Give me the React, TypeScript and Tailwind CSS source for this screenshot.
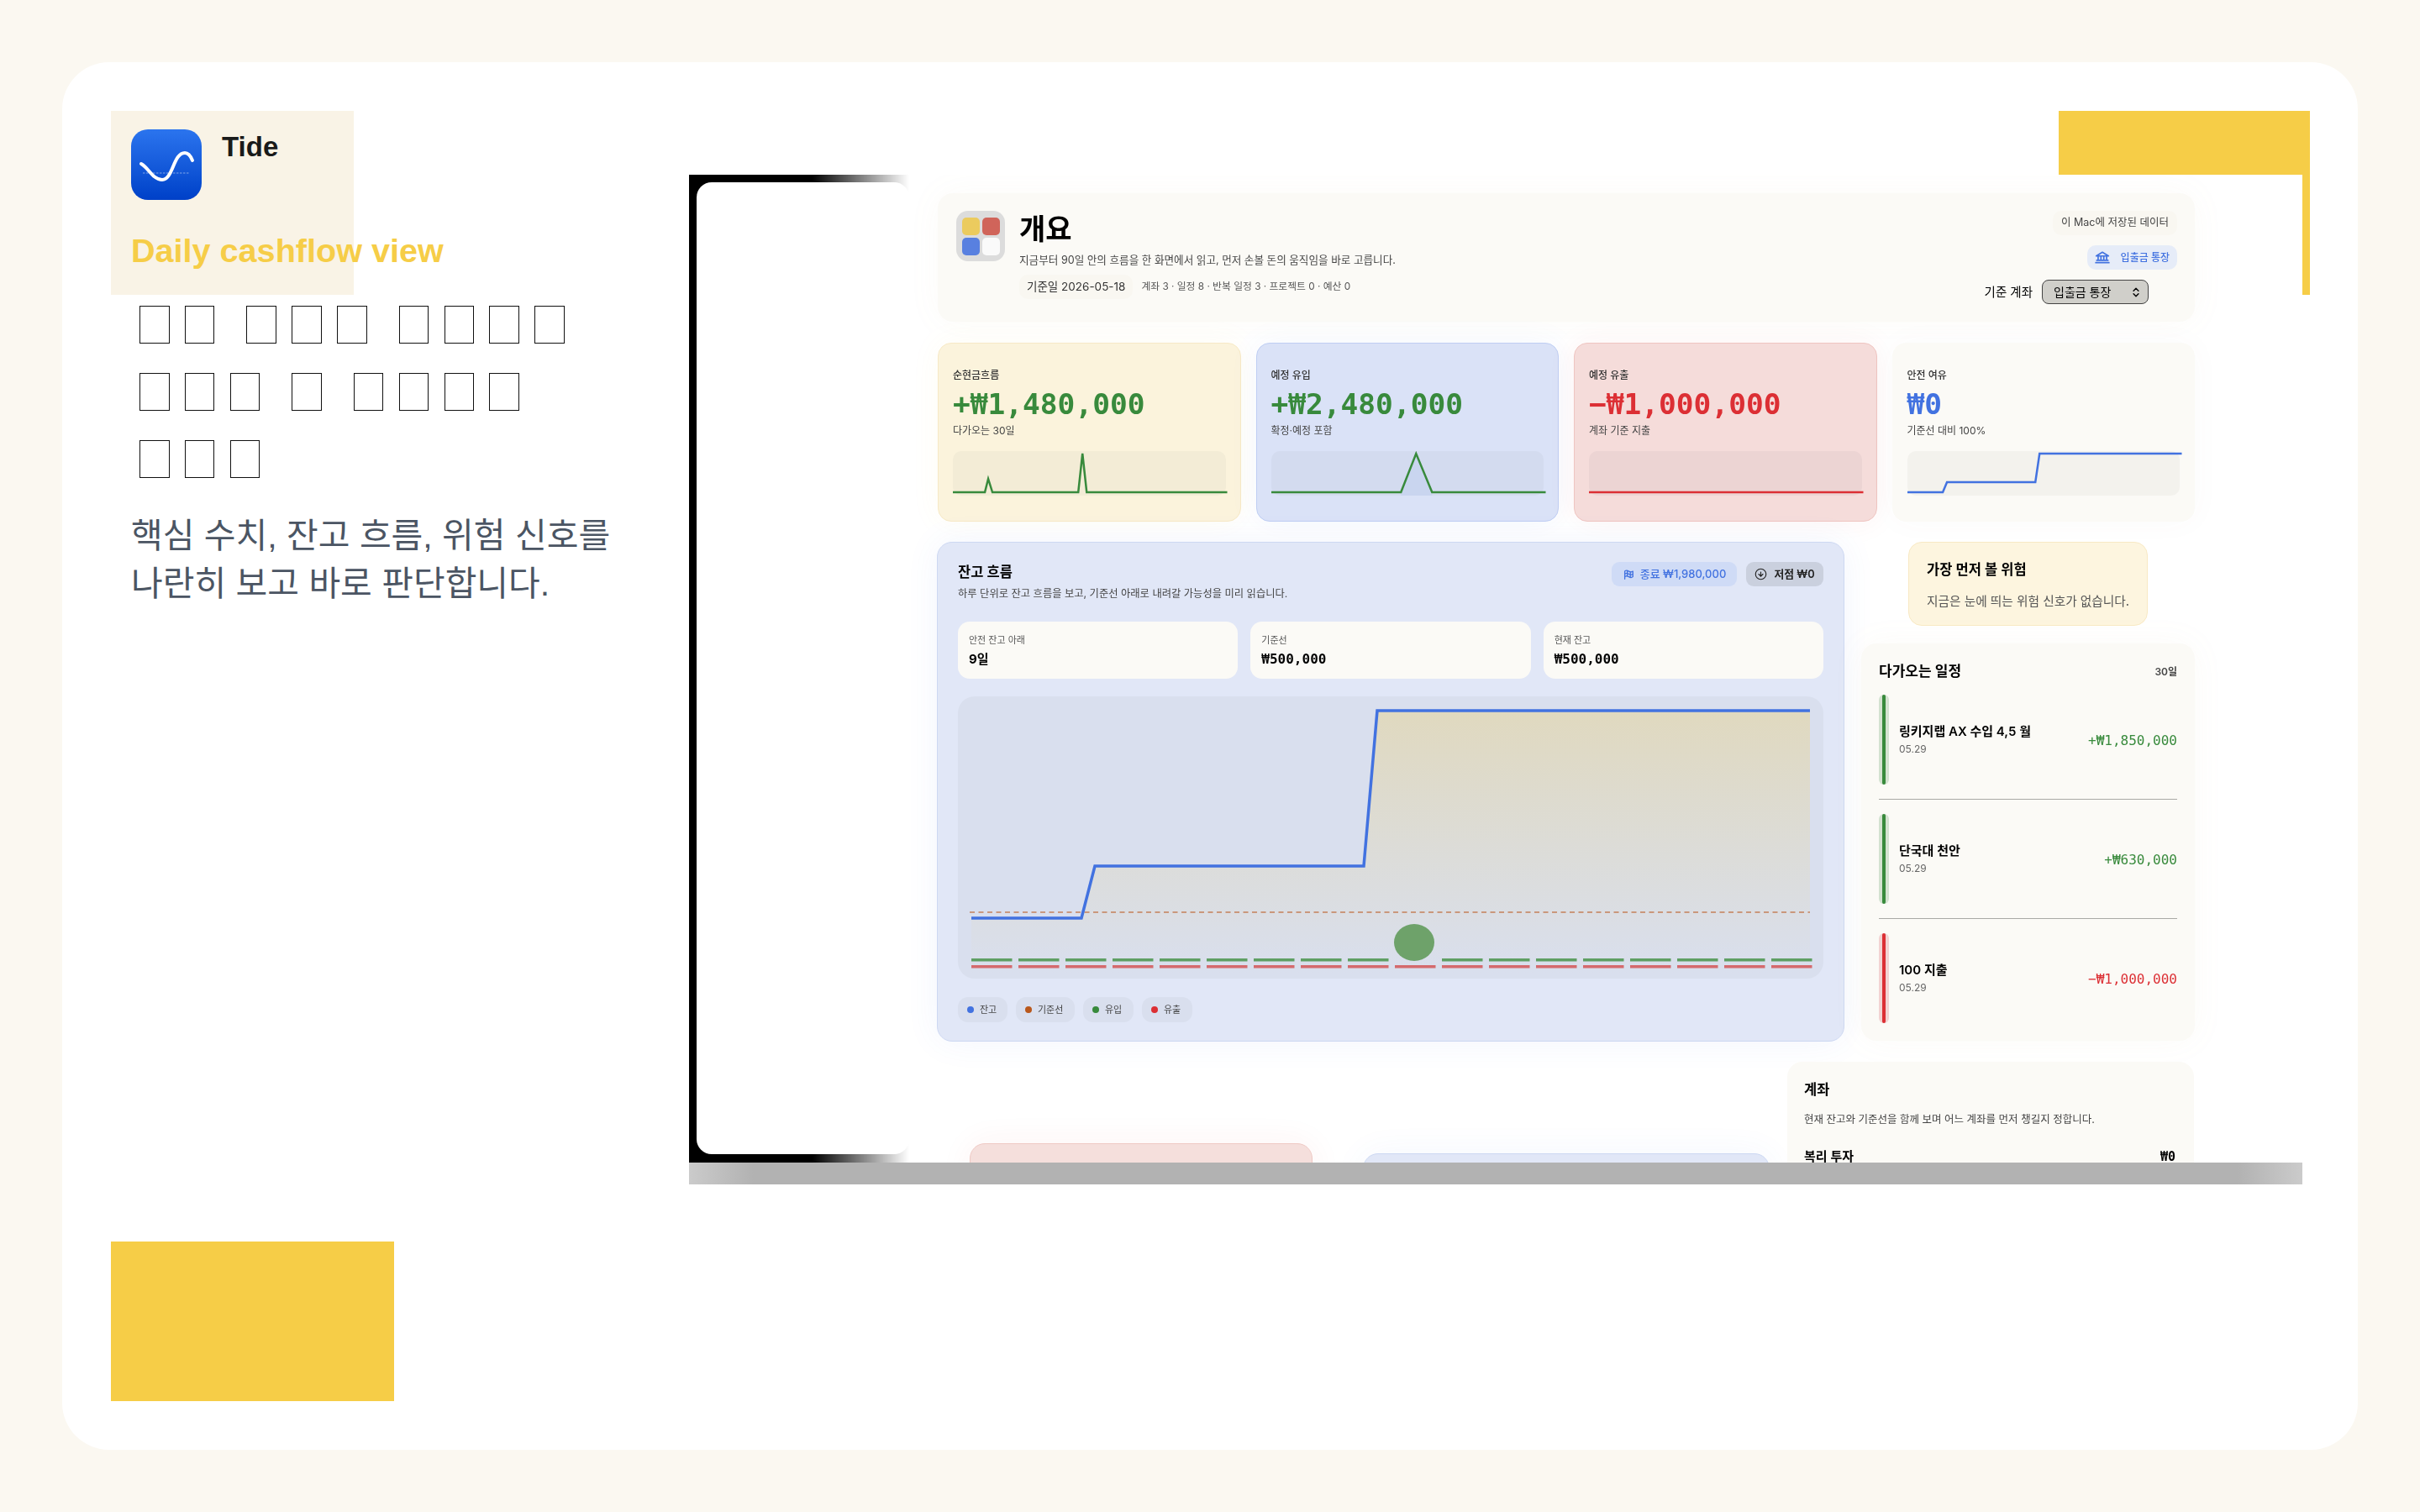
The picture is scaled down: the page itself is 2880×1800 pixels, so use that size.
import { ChevronsUpDown, CircleArrowDown } from 'lucide-react';
import { PiBankBold, PiFlagCheckeredBold } from 'react-icons/pi';

const sans = "font-['Liberation_Sans','Noto_Sans_CJK_KR',sans-serif]";
const ui = "font-['Inter','Noto_Sans_CJK_KR',sans-serif]";
const mono = "font-['DejaVu_Sans_Mono','Noto_Sans_CJK_KR',monospace]";

const tofuLines = [
    [2, 3, 4],
    [3, 1, 4],
    [3],
];

const kpis = [
    {
        label: '순현금흐름',
        value: '+₩1,480,000',
        sub: '다가오는 30일',
        card: 'bg-[#fbf3dc] border-[#f7e9c6] shadow-[0_0_36px_rgba(246,205,71,0.06)]',
        plot: 'bg-[#f3ecd6]',
        tone: 'text-[#388a3c]',
        stroke: '#388a3c',
        points: '0,49 38,49 42,33 47,49 149,49 154,3 159,49 326,49',
        fill: '',
    },
    {
        label: '예정 유입',
        value: '+₩2,480,000',
        sub: '확정·예정 포함',
        card: 'bg-[#dae2f7] border-[#bfcef3] shadow-[0_0_36px_rgba(66,114,224,0.06)]',
        plot: 'bg-[#d3dbef]',
        tone: 'text-[#388a3c]',
        stroke: '#388a3c',
        points: '0,49 154,49 172,3 191,49 326,49',
        fill: 'M154 49 L172 3 L191 49 L191 53 L154 53 Z',
    },
    {
        label: '예정 유출',
        value: '−₩1,000,000',
        sub: '계좌 기준 지출',
        card: 'bg-[#f5dcda] border-[#efc5c1] shadow-[0_0_36px_rgba(220,47,52,0.06)]',
        plot: 'bg-[#ecd4d3]',
        tone: 'text-[#dc2f34]',
        stroke: '#dc2f34',
        points: '0,49 326,49',
        fill: '',
    },
    {
        label: '안전 여유',
        value: '₩0',
        sub: '기준선 대비 100%',
        card: 'bg-[#fbfaf6] border-[#fbfaf6] shadow-[0_0_36px_rgba(120,110,80,0.03)]',
        plot: 'bg-[#f3f2ed]',
        tone: 'text-[#4272e0]',
        stroke: '#4272e0',
        points: '0,49 42,49 47,37 152,37 157,3 326,3',
        fill: '',
    },
];

const stats = [
    { label: '안전 잔고 아래', value: '9일', font: `${ui} text-[15px]` },
    { label: '기준선', value: '₩500,000', font: `${mono} text-[16px]` },
    { label: '현재 잔고', value: '₩500,000', font: `${mono} text-[16px]` },
];

const legend = [
    { label: '잔고', dot: 'bg-[#4272e0]', width: 'w-[59px]' },
    { label: '기준선', dot: 'bg-[#b9581c]', width: 'w-[70px]' },
    { label: '유입', dot: 'bg-[#388a3c]', width: 'w-[60px]' },
    { label: '유출', dot: 'bg-[#dc2f34]', width: 'w-[60px]' },
];

const schedule = [
    { title: '링키지랩 AX 수입 4,5 월', amount: '+₩1,850,000', tone: 'text-[#388a3c]', bar: 'bg-[#388a3c]', halo: 'bg-[#d3e2d0]' },
    { title: '단국대 천안', amount: '+₩630,000', tone: 'text-[#388a3c]', bar: 'bg-[#388a3c]', halo: 'bg-[#d3e2d0]' },
    { title: '100 지출', amount: '−₩1,000,000', tone: 'text-[#dc2f34]', bar: 'bg-[#dc2f34]', halo: 'bg-[#f2d3d2]' },
];

function Logo() {
    return (
        <div className="w-[84px] h-[84px] rounded-[20px] bg-gradient-to-b from-[#2b74ee] to-[#0040c8] shrink-0">
            <svg width="84" height="84" viewBox="0 0 84 84" fill="none">
                <path d="M14 52 H70" stroke="#fff" strokeOpacity="0.6" strokeWidth="0.8" strokeDasharray="2.5 1.5" />
                <path d="M12 41 C21 46 26 60 37 60 C50 60 50 28 64 28 C68 28 71 32 73 37" stroke="#fff" strokeWidth="4" strokeLinecap="round" />
            </svg>
        </div>
    );
}

function TofuHeading() {
    return (
        <div className="flex flex-col gap-[35px] pl-[10px]">
            {tofuLines.map((line, i) => (
                <div key={i} className="flex gap-[38px]">
                    {line.map((count, j) => (
                        <div key={j} className="flex gap-[18.4px]">
                            {Array.from({ length: count }).map((_, k) => (
                                <span key={k} className="w-[35.5px] h-[45px] border-[1.5px] border-[#111]" />
                            ))}
                        </div>
                    ))}
                </div>
            ))}
        </div>
    );
}

function OverviewIcon() {
    return (
        <div className="w-[58px] h-[60px] rounded-[14px] bg-[#dcdcdc] grid grid-cols-[21px_21px] grid-rows-[21px_21px] gap-[3px] content-center justify-center shrink-0">
            <span className="rounded-[5px] bg-[#ebcb5e]" />
            <span className="rounded-[5px] bg-[#d0645a]" />
            <span className="rounded-[5px] bg-[#5880e0]" />
            <span className="rounded-[5px] bg-[#fafafa]" />
        </div>
    );
}

function Header() {
    return (
        <div className="h-[153px] rounded-[18px] bg-[#fbfaf6] shadow-[0_0_40px_rgba(190,170,120,0.05)] flex justify-between pl-[22px] pr-[21px] pt-[21px]">
            <div className="flex gap-[17px]">
                <OverviewIcon />
                <div>
                    <h1 className="text-[34px] leading-[40px] font-semibold text-black mt-[2px]">개요</h1>
                    <p className="text-[12.6px] leading-[18px] text-[#444] mt-[8px]">지금부터 90일 안의 흐름을 한 화면에서 읽고, 먼저 손볼 돈의 움직임을 바로 고릅니다.</p>
                    <div className="flex items-center gap-[10px] mt-[8px]">
                        <span className="h-[29px] px-[9px] rounded-[10px] bg-[#f9f7f1] text-[13.5px] text-[#333] flex items-center">기준일 2026-05-18</span>
                        <span className="text-[11.8px] text-[#555]">계좌 3 · 일정 8 · 반복 일정 3 · 프로젝트 0 · 예산 0</span>
                    </div>
                </div>
            </div>
            <div className="flex flex-col items-end">
                <span className="h-[29px] px-[10px] rounded-[10px] bg-[#f9f7f1] text-[12.5px] text-[#444] flex items-center">이 Mac에 저장된 데이터</span>
                <span className="h-[29px] mt-[12px] pl-[9px] pr-[9px] rounded-[10px] bg-[#e6ecf8] text-[12px] font-medium text-[#4272e0] flex items-center gap-[13px]">
                    <PiBankBold size={18} />
                    입출금 통장
                </span>
                <div className="flex items-center gap-[11px] mt-[12px] mr-[34px]">
                    <span className="text-[14.5px] text-black">기준 계좌</span>
                    <span className="w-[127px] h-[29px] rounded-[8px] border-[1.5px] border-[#444] bg-[#d0cfca] text-[14px] text-black flex items-center justify-between pl-[13px] pr-[7px]">
                        입출금 통장
                        <ChevronsUpDown size={14} strokeWidth={2.4} />
                    </span>
                </div>
            </div>
        </div>
    );
}

function KpiCard({ kpi }: { kpi: typeof kpis[0] }) {
    return (
        <div className={`rounded-[16px] border ${kpi.card} pt-[30px] px-[17px]`}>
            <div className="text-[12px] leading-[16px] font-medium text-[#333]">{kpi.label}</div>
            <div className={`${mono} text-[34.5px] leading-[40px] font-bold mt-[6px] ${kpi.tone}`}>{kpi.value}</div>
            <div className="text-[12px] leading-[16px] text-[#444] mt-[4px]">{kpi.sub}</div>
            <div className={`h-[53px] rounded-[10px] mt-[16px] ${kpi.plot}`}>
                <svg className="overflow-visible" width="100%" height="53" viewBox="0 0 324 53" fill="none" preserveAspectRatio="none">
                    {kpi.fill && <path d={kpi.fill} fill="#c9d5ef" />}
                    <polyline points={kpi.points} stroke={kpi.stroke} strokeWidth="2.5" />
                </svg>
            </div>
        </div>
    );
}

function BalanceChart() {
    const dashes = Array.from({ length: 18 }, (_, i) => 16 + i * 56);
    return (
        <div className="h-[336px] rounded-[20px] bg-[#d9dfee] mt-[21px]">
            <svg width="1032" height="336" viewBox="0 0 1032 336" fill="none">
                <defs>
                    <linearGradient id="balance-area" x1="0" y1="0" x2="0" y2="1">
                        <stop offset="0" stopColor="#e0d9bf" />
                        <stop offset="1" stopColor="#d9dfee" />
                    </linearGradient>
                </defs>
                <path d="M16 264 H147 L163 202 H483 L499 17 H1014 V330 H16 Z" fill="url(#balance-area)" />
                <path d="M14 257 H1014" stroke="#b9581c" strokeOpacity="0.7" strokeWidth="1.6" strokeDasharray="6 4.5" />
                {dashes.map((x, i) => (
                    <g key={x}>
                        {i !== 9 && <rect x={x} y="312" width="48.5" height="3.5" fill="#5f9f63" />}
                        <rect x={x} y="320" width="48.5" height="3.5" fill="#d46a6d" />
                    </g>
                ))}
                <ellipse cx="543" cy="293" rx="24" ry="22" fill="#6ea26a" />
                <path d="M16 264 H147 L163 202 H483 L499 17 H1014" stroke="#4272e0" strokeWidth="3.5" />
            </svg>
        </div>
    );
}

function BalancePanel() {
    return (
        <section className="w-[1080px] -ml-[1px] h-[595px] rounded-[18px] border border-[#cdd8f2] bg-[#e1e7f7] shadow-[0_0_40px_rgba(66,114,224,0.07)] px-[24px] pt-[22px] shrink-0">
            <div className="flex justify-between">
                <div>
                    <h2 className="text-[16.5px] leading-[26px] font-semibold text-black">잔고 흐름</h2>
                    <p className="text-[12.3px] leading-[18px] text-[#444] mt-[4px]">하루 단위로 잔고 흐름을 보고, 기준선 아래로 내려갈 가능성을 미리 읽습니다.</p>
                </div>
                <div className="flex gap-[11px] mt-[1px]">
                    <span className="h-[29px] w-[149px] rounded-[9px] bg-[#cfdbf6] text-[13px] font-medium text-[#4272e0] flex items-center justify-center gap-[7px]">
                        <PiFlagCheckeredBold size={14} />
                        종료 ₩1,980,000
                    </span>
                    <span className="h-[29px] w-[92px] rounded-[9px] bg-[#cad0de] text-[12.8px] font-semibold text-[#222] flex items-center justify-center gap-[8px]">
                        <CircleArrowDown size={15} strokeWidth={1.8} />
                        저점 ₩0
                    </span>
                </div>
            </div>
            <div className="grid grid-cols-3 gap-[15px] mt-[24px]">
                {stats.map((stat) => (
                    <div key={stat.label} className="h-[68px] rounded-[14px] bg-[#fbfaf6] px-[13px] pt-[14px]">
                        <div className="text-[11px] leading-[16px] text-[#555]">{stat.label}</div>
                        <div className={`${stat.font} font-bold leading-[20px] text-black mt-[5px]`}>{stat.value}</div>
                    </div>
                ))}
            </div>
            <BalanceChart />
            <div className="flex gap-[10px] mt-[22px]">
                {legend.map((item) => (
                    <span key={item.label} className={`${item.width} h-[30px] rounded-[12px] bg-[#d9dfee] text-[11px] text-[#444] flex items-center pl-[11px] gap-[7px]`}>
                        <span className={`w-[8px] h-[8px] rounded-full ${item.dot}`} />
                        {item.label}
                    </span>
                ))}
            </div>
        </section>
    );
}

function RiskCard() {
    return (
        <div className="w-[285px] h-[100px] ml-[56px] rounded-[16px] border border-[#f8e9c4] bg-[#fdf5df] px-[21px] pt-[20px]">
            <h3 className="text-[16.5px] leading-[24px] font-semibold text-black">가장 먼저 볼 위험</h3>
            <p className="text-[14.7px] leading-[22px] text-[#555] mt-[15px] whitespace-nowrap">지금은 눈에 띄는 위험 신호가 없습니다.</p>
        </div>
    );
}

function UpcomingPanel() {
    return (
        <div className="h-[473px] mt-[21px] rounded-[18px] bg-[#fbfaf6] shadow-[0_0_40px_rgba(190,170,120,0.05)] px-[21px] pt-[20px]">
            <div className="flex items-center justify-between h-[24px] relative top-[2px]">
                <h3 className="text-[17px] font-semibold text-black">다가오는 일정</h3>
                <span className="text-[12px] font-semibold text-[#444]">30일</span>
            </div>
            <div className="flex flex-col mt-[17px]">
                {schedule.map((row, i) => (
                    <div key={row.title} className={`flex items-center gap-[12px] ${i < 2 ? 'border-b border-[#a9a9a5] pb-[17px] mb-[17px]' : ''}`}>
                        <div className={`w-[12px] h-[107px] rounded-full flex justify-center ${row.halo}`}>
                            <span className={`w-[4px] h-full rounded-full ${row.bar}`} />
                        </div>
                        <div className="flex-1">
                            <div className="text-[15px] leading-[20px] font-semibold text-black">{row.title}</div>
                            <div className="text-[12px] leading-[16px] text-[#666] mt-[3px]">05.29</div>
                        </div>
                        <div className={`${mono} text-[16px] pt-[3px] ${row.tone}`}>{row.amount}</div>
                    </div>
                ))}
            </div>
        </div>
    );
}

function BottomRow() {
    return (
        <div className="flex items-start">
            <div className="w-[408px] h-[200px] ml-[38px] mt-[121px] rounded-[18px] border border-[#efc9c4] bg-[#f5dfdc] shadow-[0_0_40px_rgba(220,47,52,0.06)] shrink-0" />
            <div className="w-[484px] h-[200px] ml-[60px] mt-[133px] rounded-[18px] border border-[#ccd8f2] bg-[#e1e7f7] shadow-[0_0_40px_rgba(66,114,224,0.06)] shrink-0" />
            <div className="w-[484px] h-[300px] ml-[21px] mt-[24px] rounded-[18px] bg-[#fbfaf6] px-[20px] pt-[21px] shrink-0">
                <h3 className="text-[16.5px] leading-[24px] font-semibold text-black">계좌</h3>
                <p className="text-[12.5px] leading-[18px] text-[#444] mt-[15px]">현재 잔고와 기준선을 함께 보며 어느 계좌를 먼저 챙길지 정합니다.</p>
                <div className="flex justify-between mt-[25px] pr-[2px]">
                    <span className="text-[15px] leading-[20px] font-semibold text-black">복리 투자</span>
                    <span className={`${mono} text-[15px] leading-[20px] font-bold text-black`}>₩0</span>
                </div>
            </div>
        </div>
    );
}

function Mockup() {
    return (
        <div className={`${ui} w-[1920px] h-[1202px] shrink-0 blur-[0.4px]`}>
            <div className="h-[1176px] flex overflow-hidden">
                <div className="w-[262px] h-full shrink-0 pl-[9px] pt-[9px] pb-[10px] bg-[linear-gradient(to_right,#000_56%,transparent_100%)]">
                    <div className="h-full rounded-[18px] bg-white" />
                </div>
                <div className="w-[1496px] ml-[34px] pt-[22px] shrink-0">
                    <Header />
                    <div className="grid grid-cols-4 gap-[18px] h-[213px] mt-[25px]">
                        {kpis.map((kpi) => (
                            <KpiCard key={kpi.label} kpi={kpi} />
                        ))}
                    </div>
                    <div className="flex gap-[20px] mt-[24px]">
                        <BalancePanel />
                        <div className="w-[397px] shrink-0">
                            <RiskCard />
                            <UpcomingPanel />
                        </div>
                    </div>
                    <BottomRow />
                </div>
            </div>
            <div className="h-[26px] bg-[linear-gradient(to_right,#cbcbcb,#b2b2b2_4%,#b2b2b2_96%,#cbcbcb)]" />
        </div>
    );
}

export default function App() {
    return (
        <div className={`${sans} w-full h-[1800px] bg-[#fbf8f1] p-[74px]`}>
            <div className="relative h-[1652px] rounded-[56px] bg-white overflow-hidden flex">
                <div className="absolute left-[58px] top-[58px] w-[289px] h-[219px] bg-[#f9f3e6]" />
                <div className="absolute left-[58px] bottom-[58px] w-[337px] h-[190px] bg-[#f6cd47]" />
                <div className="absolute left-[2376px] top-[58px] w-[299px] h-[76px] bg-[#f6cd47]" />
                <div className="absolute left-[2666px] top-[134px] w-[9px] h-[143px] bg-[#f6cd47]" />

                <div className="relative w-[746px] shrink-0 pl-[82px] pt-[80px]">
                    <div className="flex gap-[24px]">
                        <Logo />
                        <div className="text-[33px] leading-[38px] font-bold text-[#1a1a1a] pt-[2px]">Tide</div>
                    </div>
                    <div className="text-[39.6px] leading-[48px] font-bold text-[#f6cd47] mt-[36px]">Daily cashflow view</div>
                    <div className="mt-[42px]">
                        <TofuHeading />
                    </div>
                    <p className="text-[41px] leading-[56.5px] text-[#4b5563] mt-[41px] whitespace-pre-line">{'핵심 수치, 잔고 흐름, 위험 신호를\n나란히 보고 바로 판단합니다.'}</p>
                </div>
                <div className="relative mt-[134px]">
                    <Mockup />
                </div>
            </div>
        </div>
    );
}
